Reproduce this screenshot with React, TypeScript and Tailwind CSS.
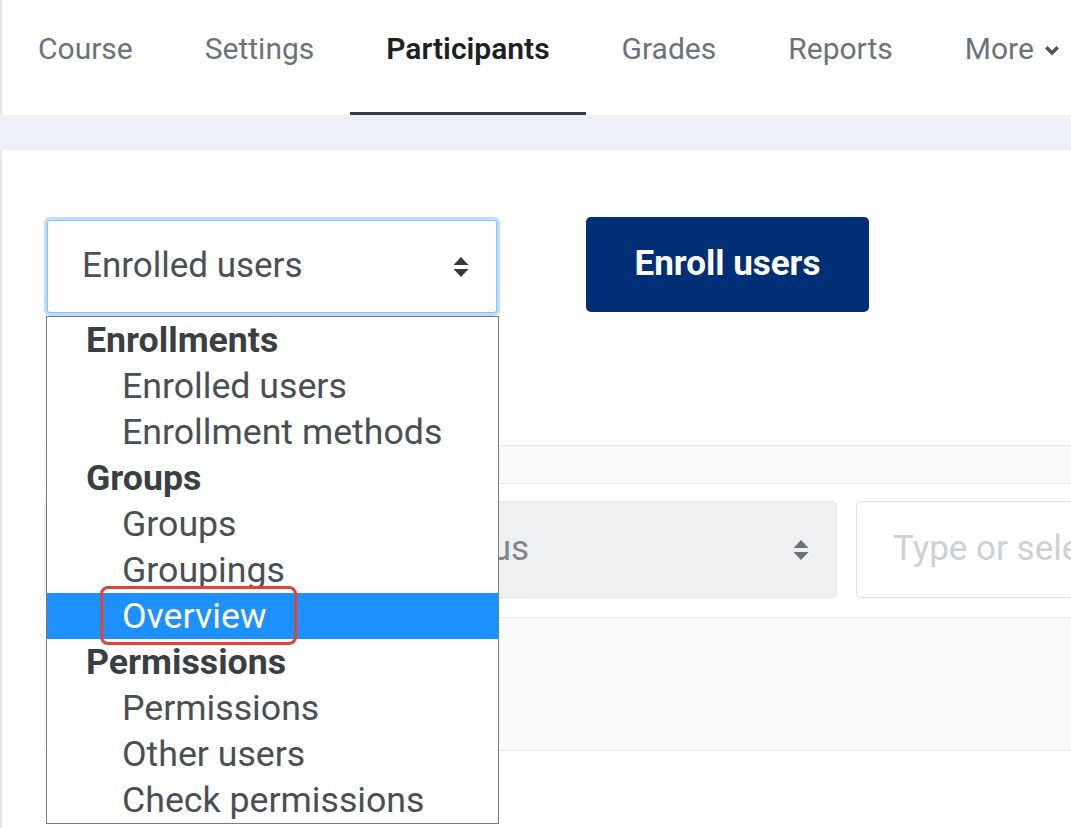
import type { ReactNode } from 'react'

const navItems = ['Course', 'Settings', 'Participants', 'Grades', 'Reports']

type Option = { label: string; header?: boolean; active?: boolean }

const options: Option[] = [
  { label: 'Enrollments', header: true },
  { label: 'Enrolled users' },
  { label: 'Enrollment methods' },
  { label: 'Groups', header: true },
  { label: 'Groups' },
  { label: 'Groupings' },
  { label: 'Overview', active: true },
  { label: 'Permissions', header: true },
  { label: 'Permissions' },
  { label: 'Other users' },
  { label: 'Check permissions' },
]

function SortIcon({ className = '' }: { className?: string }) {
  return (
    <svg viewBox="0 0 18 22" className={className} fill="currentColor">
      <path d="M9 1 L16.5 9 L1.5 9 Z" />
      <path d="M9 21 L16.5 13 L1.5 13 Z" />
    </svg>
  )
}

function NavItem({ children, active = false }: { children: ReactNode; active?: boolean }) {
  return (
    <div
      className={`flex h-full items-center px-9 pb-[15px] text-[30px] ${
        active ? 'border-b-[3px] border-[#343b45] font-semibold text-[#1d2125]' : 'border-b-[3px] border-transparent text-[#6a737b]'
      }`}
    >
      {children}
    </div>
  )
}

export default function App() {
  return (
    <div className="relative h-[828px] w-[1071px] overflow-hidden bg-white font-['Roboto',sans-serif]">
      {/* top tabs */}
      <nav className="flex h-[115px] items-stretch border-l-2 border-[#e4e7ec] pl-0">
        {navItems.map((n) => (
          <NavItem key={n} active={n === 'Participants'}>
            {n}
          </NavItem>
        ))}
        <NavItem>
          <span>More</span>
          <svg viewBox="0 0 14 10" className="ml-[10px] mt-[3px] h-[11px] w-[16px] text-[#4d555c]" fill="none" stroke="currentColor" strokeWidth="3.2">
            <path d="M1.8 2 L7 7.2 L12.2 2" />
          </svg>
        </NavItem>
      </nav>

      <div className="h-[35px] bg-[#edf0f7]" />

      {/* content */}
      <div className="h-[678px] border-l-2 border-[#e4e7ec] pt-[67px]">
        <div className="flex items-start pl-[42px]">
          <div className="rounded-[6px] bg-[#bfdcfd] p-[3px]">
            <div className="flex h-[93px] w-[450px] items-center justify-between rounded-[3px] border border-[#8ec0f8] bg-white pl-[34px] pr-[26px] text-[35px] text-[#495057]">
              <span>Enrolled users</span>
              <SortIcon className="h-[22px] w-[18px] text-[#343a40]" />
            </div>
          </div>
          <button className="ml-[86px] h-[95px] w-[283px] rounded-[5px] bg-[#002f76] text-[35px] font-bold text-white">
            Enroll users
          </button>
        </div>

        {/* filter area behind dropdown */}
        <div className="ml-[42px] mt-[129px] h-[39px] border-y border-[#e3e6ea] bg-[#f8f9fa]" />
        <div className="ml-[42px] mt-[17px] flex gap-[19px]">
          <div className="flex h-[97px] w-[793px] shrink-0 items-center justify-between rounded-[5px] border border-[#e4e6e9] bg-[#eff0f2] pl-[384px] pr-[26px] text-[35px] text-[#7f868c]">
            <span>Status</span>
            <SortIcon className="h-[22px] w-[18px] text-[#6c7278]" />
          </div>
          <div className="flex h-[97px] min-w-0 flex-1 items-center overflow-hidden rounded-l-[5px] border border-r-0 border-[#dee2e6] bg-white pl-[36px] text-[35px] text-[#cdd1d5]">
            <span className="whitespace-nowrap">Type or select...</span>
          </div>
        </div>
        <div className="ml-[42px] mt-[19px] h-[134px] border-y border-[#e3e6ea] bg-[#f8f9fa]" />
      </div>

      {/* open select list */}
      <ul className="absolute left-[46px] top-[316px] w-[453px] border border-[#7b7b7b] bg-white text-[35.7px] leading-[46px]">
        {options.map((o, i) => (
          <li
            key={i}
            className={`h-[46px] whitespace-nowrap ${
              o.header ? 'pl-[39px] font-bold text-[#3a3f44]' : 'pl-[75px] text-[#4a4f55]'
            } ${o.active ? 'bg-[#1e90ff] text-white' : ''}`}
          >
            {o.label}
          </li>
        ))}
      </ul>

      {/* annotation */}
      <div className="pointer-events-none absolute left-[100px] top-[586px] h-[59px] w-[197px] rounded-[8px] border-[3px] border-[#e0452f]" />
    </div>
  )
}
